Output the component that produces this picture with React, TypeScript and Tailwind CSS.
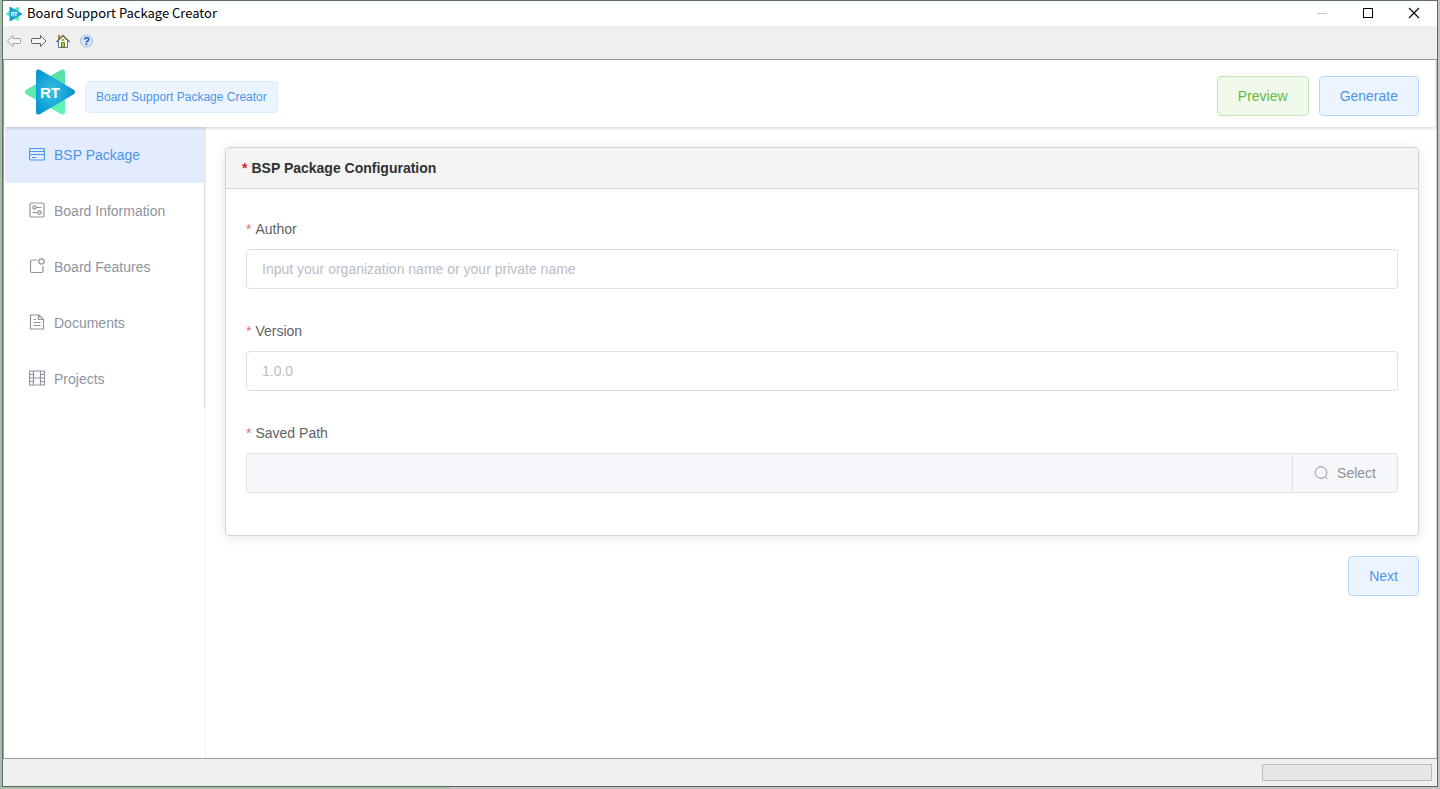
import React from "react"

const navItems = [
  { name: "BSP Package", icon: "card" },
  { name: "Board Information", icon: "setup" },
  { name: "Board Features", icon: "feature" },
  { name: "Documents", icon: "document" },
  { name: "Projects", icon: "film" },
]

function Logo({ className }: { className: string }) {
  return (
    <svg className={className} viewBox="0 0 50 46">
      <defs>
        <radialGradient id="blue" cx="0.4" cy="0.5" r="0.6">
          <stop offset="0" stopColor="#35c3e2" />
          <stop offset="1" stopColor="#0a96d3" />
        </radialGradient>
        <linearGradient id="green" x1="0" y1="0" x2="0" y2="1">
          <stop offset="0" stopColor="#56dfa6" />
          <stop offset="1" stopColor="#62f5b5" />
        </linearGradient>
      </defs>
      <path d="M2.500 23L37.500 3V43Z" fill="url(#green)" stroke="url(#green)" strokeWidth="5" strokeLinejoin="round" />
      <path d="M47.500 23L13.500 3V43Z" fill="url(#blue)" stroke="url(#blue)" strokeWidth="5" strokeLinejoin="round" />
      <text x="25" y="29" textAnchor="middle" className="font-['Liberation_Sans',sans-serif] text-[15px] font-bold fill-white">RT</text>
    </svg>
  )
}

function NavIcon({ icon }: { icon: string }) {
  return (
    <svg className="w-4 h-4 mx-1 mb-0.5 shrink-0" viewBox="0 0 16 16" fill="none" stroke="currentColor" strokeWidth="1.2">
      {icon === "card" && <path d="M2 2.500H14Q15.500 2.500 15.500 4V12.500Q15.500 14 14 14H2Q.5 14 .5 12.500V4Q.5 2.500 2 2.500ZM.5 5.500H15.500M.5 8.500H15.500M3 11.500H7" />}
      {icon === "setup" && (
        <>
          <rect x="1" y="1" width="14" height="14" rx="1.5" />
          <circle cx="5.500" cy="5.500" r="1.700" />
          <circle cx="10.500" cy="10.500" r="1.700" />
          <path d="M7.200 5.500H12.500M3.500 10.500H8.800" />
        </>
      )}
      {icon === "feature" && (
        <>
          <path d="M8 2H3Q1.500 2 1.500 3.500V13Q1.500 14.500 3 14.500H12.500Q14 14.500 14 13V8" />
          <circle cx="12.500" cy="3.500" r="2.700" />
        </>
      )}
      {icon === "document" && <path d="M1.500 1H10L14.500 5.500V15H1.500ZM9.500 1V5.500H14.500M4.500 5.500H7M4.500 8.500H11.500M4.500 11.500H11.500" />}
      {icon === "film" && <path d="M.5 1H15.500V15H.5ZM4.500 1V15M11.500 1V15M4.500 8H11.500M.5 4.500H4.500M.5 8H4.500M.5 11.500H4.500M11.500 4.500H15.500M11.500 8H15.500M11.500 11.500H15.500" />}
    </svg>
  )
}

function TitleBar() {
  return (
    <div className="flex items-center h-[25px] bg-white pl-[3px]">
      <Logo className="w-4 h-4" />
      <h1 className="flex-1 pl-[5px] pb-0.5 font-['Noto_Sans_CJK_SC',sans-serif] text-[13px] text-black">Board Support Package Creator</h1>
      <button aria-label="Minimize" className="w-[46px] h-[25px] flex items-center justify-center">
        <svg className="w-3 h-3" viewBox="0 0 12 12"><path d="M1 5.500H11" stroke="#c4c4c4" /></svg>
      </button>
      <button aria-label="Maximize" className="w-[46px] h-[25px] pb-px flex items-center justify-center">
        <svg className="w-3 h-3" viewBox="0 0 12 12"><rect x="1.500" y="1.500" width="9" height="9" fill="none" stroke="#000" /></svg>
      </button>
      <button aria-label="Close" className="w-[46px] h-[25px] pb-px flex items-center justify-center">
        <svg className="w-3 h-3" viewBox="0 0 12 12"><path d="M1 1L11 11M11 1L1 11" stroke="#000" strokeWidth="1.100" /></svg>
      </button>
    </div>
  )
}

function Toolbar() {
  return (
    <div className="flex items-center gap-2 h-[34px] bg-[#efefef] border-b border-[#9f9f9f] pl-1 pb-1">
      <button aria-label="Back">
        <svg className="w-4 h-4" viewBox="0 0 16 16"><path d="M.5 8L6 2.500V5.500H12.500Q13.500 5.500 13.500 6.500V9.500Q13.500 10.500 12.500 10.500H6V13.500Z" fill="#f6f6f6" stroke="#a0a0a0" /></svg>
      </button>
      <button aria-label="Forward">
        <svg className="w-4 h-4" viewBox="0 0 16 16"><path d="M15 8L9.500 2.500V5.500H1.500Q.5 5.500 .5 6.500V9.500Q.5 10.500 1.500 10.500H9.500V13.500Z" fill="#f6f6f6" stroke="#606060" /></svg>
      </button>
      <button aria-label="Home">
        <svg className="w-4 h-4" viewBox="0 0 16 16">
          <path d="M3 2H5V6H3Z" fill="#b07a4a" />
          <path d="M3.500 7.500L8 3L12.500 7.500V14.500H3.500Z" fill="#fff" stroke="#56789b" />
          <path d="M1.500 9L8 2.500L14.500 9" fill="none" stroke="#6a6747" strokeWidth="1.300" />
          <path d="M6.500 9.500H9.500V14H6.500Z" fill="#b9cf35" stroke="#647b26" />
          <path d="M6.500 7H9.500" stroke="#8faf25" strokeWidth="2" />
        </svg>
      </button>
      <button aria-label="Help">
        <svg className="w-4 h-4" viewBox="0 0 16 16">
          <circle cx="7.500" cy="8" r="6" fill="#d6e6fa" stroke="#a4c2e8" />
          <text x="7.500" y="12" textAnchor="middle" fontSize="11" fontWeight="700" fill="#174eae" fontFamily="Liberation Sans, sans-serif">?</text>
        </svg>
      </button>
    </div>
  )
}

function Field({ id, label, placeholder }: { id: string; label: string; placeholder: string }) {
  return (
    <div className="mb-[22px]">
      <Label id={id} label={label} />
      <input id={id} type="text" placeholder={placeholder} className="block w-full h-10 px-[15px] rounded border border-[#dcdfe6] bg-white text-[#606266] placeholder:text-[#b9bdc7] outline-none" />
    </div>
  )
}

function Label({ id, label }: { id: string; label: string }) {
  return (
    <label htmlFor={id} className="flex h-10 items-center gap-1 text-[#606266]">
      <span className="text-[#e87070]">*</span>
      {label}
    </label>
  )
}

export default function App() {
  const [active, setActive] = React.useState("BSP Package")

  return (
    <div className="min-h-screen flex flex-col bg-[linear-gradient(to_right,#a5bfa9_450px,#c4c4c4_450px)] px-0.5 pb-0.5 font-['Liberation_Sans',Arial,sans-serif] text-[14px] leading-5">
      <div className="flex-1 flex flex-col border border-[#5f6b63] bg-[#efefef]">
        <TitleBar />
        <Toolbar />

        <div className="flex-1 flex flex-col bg-white border-l border-r border-l-[#a0a0a0] border-r-[#d0d0d0] px-px">
          <header className="relative flex items-center h-[67px] pl-5 pr-4 pt-[5px] shadow-[0_1px_3px_rgba(0,0,0,0.2)]">
            <Logo className="w-[50px] h-[46px] mb-2" />
            <span className="ml-2.5 mt-0.5 flex items-center h-8 px-2.5 rounded border border-[#d9ecff] bg-[#ecf5ff] text-[12px] text-[#4d94e8]">Board Support Package Creator</span>
            <div className="ml-auto flex gap-2.5">
              <button className="h-10 px-5 rounded border border-[#c2e7b0] bg-[#f0f9eb] text-[#67b945]">Preview</button>
              <button className="h-10 px-5 rounded border border-[#b3d8ff] bg-[#ecf5ff] text-[#4d94e8]">Generate</button>
            </div>
          </header>

          <div className="flex-1 flex">
            <aside className="w-[201px] shrink-0 border-r border-[#f3f3f3]">
              <nav className="border-r border-[#e2e2e6]">
                {navItems.map((item) => (
                  <a
                    key={item.name}
                    href="#"
                    onClick={() => setActive(item.name)}
                    className={
                      active === item.name
                        ? "flex items-center gap-[5px] h-14 px-5 bg-[#e3ecff] text-[#4d94e8]"
                        : "flex items-center gap-[5px] h-14 px-5 text-[#8d949e]"
                    }
                  >
                    <NavIcon icon={item.icon} />
                    {item.name}
                  </a>
                ))}
              </nav>
            </aside>

            <main className="flex-1 min-w-0 pt-5 pl-[19px] pr-4">
              <section className="rounded border border-[#d3d3d6] shadow-[0_2px_12px_rgba(0,0,0,0.1)]">
                <h2 className="flex items-center gap-1 h-[41px] px-4 rounded-t bg-[#f4f4f4] border-b border-[#d3d3d6] font-bold text-[#303133]">
                  <span className="text-[#e02020]">*</span>
                  BSP Package Configuration
                </h2>
                <form className="p-5">
                  <Field id="author" label="Author" placeholder="Input your organization name or your private name" />
                  <Field id="version" label="Version" placeholder="1.0.0" />
                  <div className="mb-[22px]">
                    <Label id="path" label="Saved Path" />
                    <div className="flex h-10">
                      <input id="path" type="text" disabled className="flex-1 min-w-0 px-[15px] rounded-l border border-r-0 border-[#e1e4eb] bg-[#f5f7fa]" />
                      <button type="button" className="flex items-center gap-2 pl-5 pr-[21px] rounded-r border border-[#dcdfe6] bg-[#f5f7fa] text-[#909399]">
                        <svg className="w-4 h-4" viewBox="0 0 16 16" fill="none" stroke="currentColor">
                          <circle cx="8" cy="7.500" r="5.800" />
                          <path d="M12 11.500L14.500 14" />
                        </svg>
                        Select
                      </button>
                    </div>
                  </div>
                </form>
              </section>
              <div className="flex justify-end pt-5">
                <button className="h-10 px-5 rounded border border-[#b3d8ff] bg-[#ecf5ff] text-[#4d94e8]">Next</button>
              </div>
            </main>
          </div>
        </div>

        <footer className="flex items-center justify-end h-7 pr-[5px] border-t border-[#9f9f9f] bg-[#efefef]">
          <div className="w-[170px] h-[17px] border border-[#bcbcbc] bg-[#e6e6e6]"></div>
        </footer>
      </div>
    </div>
  )
}
